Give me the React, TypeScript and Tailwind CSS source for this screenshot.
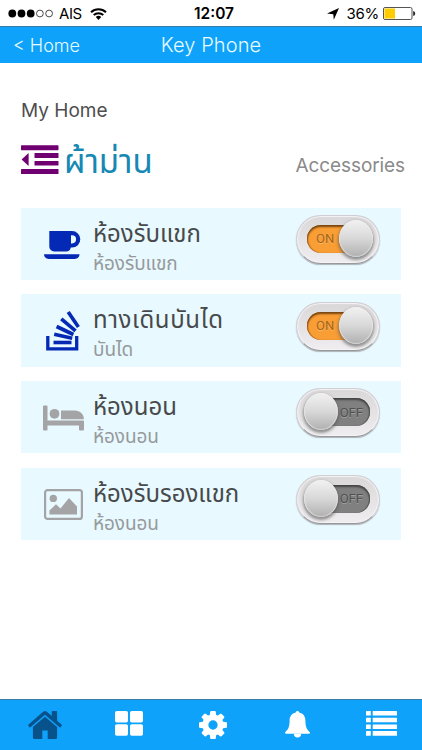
import type { ReactNode } from 'react'
import { clsx } from 'clsx'

type Room = {
  id: number
  title: string
  subtitle: string
  on: boolean
  wide?: boolean
  icon: ReactNode
}

const ROOMS: Room[] = [
  { id: 1, title: 'ห้องรับแขก', subtitle: 'ห้องรับแขก', on: true, icon: <CoffeeIcon /> },
  { id: 2, title: 'ทางเดินบันได', subtitle: 'บันได', on: true, wide: true, icon: <StairsIcon /> },
  { id: 3, title: 'ห้องนอน', subtitle: 'ห้องนอน', on: false, icon: <BedIcon /> },
  { id: 4, title: 'ห้องรับรองแขก', subtitle: 'ห้องนอน', on: false, icon: <PictureIcon /> },
]

function CoffeeIcon() {
  return (
    <svg viewBox="0 0 37 28" className="w-[37px] h-7 ml-px" fill="#0429b4">
      <path d="M5.300 0H28a8.300 8.300 0 0 1 0 16.600h-1.200A4.800 4.800 0 0 1 22 20.500H10a4.800 4.800 0 0 1-4.700-4.700zM27 4.200v8.200h1a4.100 4.100 0 0 0 0-8.200z" fillRule="evenodd" />
      <path d="M0 23.200h35.500c0 2.600-2.200 4.700-4.800 4.700H4.800C2.200 27.900 0 25.800 0 23.200z" />
    </svg>
  )
}

function StairsIcon() {
  return (
    <svg viewBox="0 0 34 40" className="w-[34px] h-10 ml-[3px] -mt-px" fill="none" stroke="#0429b4">
      <path d="M1.800 25v12.800h28.900V25" strokeWidth="3.300" />
      <g strokeWidth="3.600">
        <path d="M7.500 31.500h18" />
        <path d="M8.200 23.200l18 4" />
        <path d="M10.600 15.500l16.800 8" />
        <path d="M15.300 7.900l14.200 12" />
        <path d="M22.200 1.100l10.200 15" />
      </g>
    </svg>
  )
}

function BedIcon() {
  return (
    <svg viewBox="0 0 41 26" className="w-[41px] h-[26px]" fill="#a4a4a6">
      <path d="M0 1.500Q0 .5 1 .5h2.500q1 0 1 1v14H40q1 0 1 1v8q0 1-1 1h-3q-1 0-1-1v-4H4.500v4q0 1-1 1H1q-1 0-1-1z" />
      <circle cx="11.500" cy="8.800" r="4.900" />
      <path d="M18 5.500h14c5 0 8.900 3.800 8.900 8.800H18z" />
    </svg>
  )
}

function PictureIcon() {
  return (
    <svg viewBox="0 0 39 31" className="w-[39px] h-[31px] ml-px -mt-[2px]" fill="#a4a4a6">
      <rect x="1.100" y="1.100" width="36.800" height="28.800" rx="2.500" fill="none" stroke="#a4a4a6" strokeWidth="2.200" />
      <circle cx="9.300" cy="9.400" r="3.700" />
      <path d="M5.400 25.600v-4l6.600-6.400 4.500 4.300L25 9l8 8.500v8.100z" />
    </svg>
  )
}

function OutdentIcon() {
  return (
    <svg viewBox="0 0 38 30" className="w-[38px] h-[30px]" fill="#700072">
      <rect x="0" y="0.300" width="37.500" height="4.900" rx=".6" />
      <rect x="13.500" y="8" width="24" height="5" rx=".6" />
      <rect x="13.500" y="16" width="24" height="4.600" rx=".6" />
      <rect x="0" y="24" width="37.500" height="5" rx=".6" />
      <path d="M.6 14.400L7.600 8v13z" />
    </svg>
  )
}

function StatusBar() {
  return (
    <div className="h-[26px] shrink-0 grid grid-cols-[1fr_auto_1fr] items-center pl-2 pr-[6px] text-black text-[15px] leading-[26px]">
      <div className="flex items-center">
        <svg viewBox="0 0 46 9" className="w-[46px] h-[9px]" fill="#000">
          <circle cx="4.300" cy="4.500" r="3.900" />
          <circle cx="13.500" cy="4.500" r="3.900" />
          <circle cx="22.700" cy="4.500" r="3.900" />
          <circle cx="31.900" cy="4.500" r="3.400" fill="none" stroke="#333" strokeWidth=".9" />
          <circle cx="41.100" cy="4.500" r="3.400" fill="none" stroke="#333" strokeWidth=".9" />
        </svg>
        <span className="ml-[5px] w-6 tracking-[-0.4px]">AIS</span>
        <svg viewBox="0 0 17 12" className="ml-[7px] w-[17px] h-3" fill="none" stroke="#000" strokeWidth="2">
          <path d="M1 4.200a11 11 0 0 1 15 0" />
          <path d="M3.700 7.100a7 7 0 0 1 9.600 0" />
          <path d="M5.800 9.100a4 4 0 0 1 5.400 0L8.500 11.900z" fill="#000" stroke="none" />
        </svg>
      </div>
      <span className="font-semibold text-[15.500px] pt-px pl-[4px]">12:07</span>
      <div className="flex items-center justify-end">
        <svg viewBox="0 0 12 12" className="w-3 h-3 mr-2" fill="#000">
          <path d="M12 0L6.800 11.700 6.300 6.200 0 5.400z" />
        </svg>
        <span className="tracking-[-0.300px]">36%</span>
        <svg viewBox="0 0 33 13" className="w-[33px] h-[13px] ml-[4px]">
          <rect x=".5" y=".5" width="28.500" height="12" rx="1.500" fill="#fff" stroke="#555" />
          <rect x="1.500" y="1.500" width="10.500" height="10" fill="#fc0" />
          <path d="M30.200 4q2 .4 2 2.500t-2 2.500z" fill="#222" />
        </svg>
      </div>
    </div>
  )
}

function NavBar() {
  return (
    <div className="h-[37px] shrink-0 grid grid-cols-[1fr_auto_1fr] items-center bg-[#0fa2fa] border-t border-[#377ba6] px-[13px] text-[#e8fbff]">
      <span className="text-[18px] pt-px font-light">&lt; Home</span>
      <span className="text-[20px] font-light tracking-[0.1px]">Key Phone</span>
      <span />
    </div>
  )
}

function Toggle({ on }: { on: boolean }) {
  return (
    <div className="relative w-[84px] h-[49px] rounded-full border border-[#cfced2] border-b-[#98989c] bg-linear-to-b from-[#dad7d9] to-[#efedef] shadow-[0_1px_1px_#7778,inset_0_0_1px_1px_#f6f4f6]">
      <div
        className={clsx(
          "absolute top-[9px] left-[10px] w-[63px] h-[28px] rounded-full flex items-center text-[13px] font-['Roboto',sans-serif] [text-shadow:0_1px_0_#fff4]",
          on
            ? 'bg-[#f99d35] text-[#a4661c] pl-[9px] shadow-[inset_0_2px_2px_#754510,inset_1px_0_1px_#a8651d]'
            : 'bg-[#808080] text-[#505050] justify-end pr-[7px] shadow-[inset_0_2px_2px_#444,inset_-1px_0_1px_#555]'
        )}
      >
        {on ? 'ON' : 'OFF'}
      </div>
      <div
        className={clsx(
          'absolute top-[4px] w-[34px] h-[37px] rounded-[50%] bg-linear-to-b from-[#f2f2f2] via-[#d8d8d8] to-[#b0b0b0] shadow-[0_2px_3px_1px_#5559,inset_0_0_1px_1px_#eee8]',
          on ? 'left-[42px]' : 'left-[7px]'
        )}
      />
    </div>
  )
}

function RoomRow({ room }: { room: Room }) {
  return (
    <div className="h-[72.500px] flex items-start bg-[#e8f9ff] pl-[22px] pr-[21px]">
      <div className="w-[50px] h-[73px] flex items-center pt-[2px]">{room.icon}</div>
      <div className="flex-1 whitespace-nowrap">
        <div
          className={clsx(
            'mt-[10px] h-8 text-[24px] leading-8 text-[#47494b]',
            room.wide && 'tracking-[0.6px]'
          )}
        >
          {room.title}
        </div>
        <div className="mt-[2px] h-6 text-[19px] leading-6 tracking-[-0.1px] text-[#969a9c]">{room.subtitle}</div>
      </div>
      <div className="mt-[7.500px]">
        <Toggle on={room.on} />
      </div>
    </div>
  )
}

function TabBar() {
  return (
    <div className="h-[51px] shrink-0 bg-[#0fa2fa] border-t border-[#377ba6] grid grid-cols-5 justify-items-center items-start pt-[11px] pl-[3px] -mr-px">
      <svg viewBox="88 253 1616 1283" preserveAspectRatio="none" className="w-[34px] h-7" fill="#07528b">
        <path d="M1472 992v480q0 26-19 45t-45 19h-384v-384h-256v384h-384q-26 0-45-19t-19-45v-480q0-1 .5-3t.5-3l575-474 575 474q1 2 1 6zm223-69l-62 74q-8 9-21 11h-3q-13 0-21-7l-692-577-692 577q-12 8-24 7-13-2-21-11l-62-74q-8-10-7-23.500t11-21.500l719-599q32-26 76-26t76 26l244 204v-195q0-14 9-23t23-9h192q14 0 23 9t9 23v408l219 182q10 8 11 21.500t-7 23.500z" />
      </svg>
      <svg viewBox="0 0 28 25" className="w-7 h-[25px]" fill="#fff">
        <rect x="0" y="0" width="13" height="11.500" rx="1.800" />
        <rect x="15" y="0" width="13" height="11.500" rx="1.800" />
        <rect x="0" y="13.300" width="13" height="11.500" rx="1.800" />
        <rect x="15" y="13.300" width="13" height="11.500" rx="1.800" />
      </svg>
      <svg viewBox="128 128 1536 1536" className="w-7 h-7" fill="#fff">
        <path d="M1152 896q0-106-75-181t-181-75-181 75-75 181 75 181 181 75 181-75 75-181zm512-109v222q0 12-8 23t-20 13l-185 28q-19 54-39 91 35 50 107 138 10 12 10 25t-9 23q-27 37-99 108t-94 71q-12 0-26-9l-138-108q-44 23-91 38-16 136-29 186-7 28-36 28h-222q-14 0-24.500-8.500t-11.500-21.500l-28-184q-49-16-90-37l-141 107q-10 9-25 9-14 0-25-11-126-114-165-168-7-10-7-23 0-12 8-23 15-21 51-66.500t54-70.500q-27-50-41-99l-183-27q-13-2-21-12.500t-8-23.500v-222q0-12 8-23t19-13l186-28q14-46 39-92-40-57-107-138-10-12-10-24 0-10 9-23 26-36 98.500-107.500t94.500-71.500q13 0 26 10l138 107q44-23 91-38 16-136 29-186 7-28 36-28h222q14 0 24.500 8.500t11.500 21.500l28 184q49 16 90 37l142-107q9-9 24-9 13 0 25 10 129 119 165 170 7 8 7 22 0 12-8 23-15 21-51 66.500t-54 70.500q26 50 41 98l183 28q13 2 21 12.500t8 23.500z" />
      </svg>
      <svg viewBox="0 0 25 27" className="w-[25px] h-[27px]" fill="#fff">
        <path d="M12.500 0c1 0 1.700.7 1.700 1.600 4 .8 6.200 4 6.200 8 0 6.400 1.600 9.400 4.600 11.800 0 1-.8 1.300-1.700 1.300H1.700C.8 22.700 0 22.400 0 21.400c3-2.400 4.600-5.400 4.600-11.800 0-4 2.200-7.200 6.200-8C10.800.7 11.500 0 12.500 0z" />
        <path d="M8.900 22.700h7.200a3.600 3.800 0 0 1-7.200 0z" />
      </svg>
      <svg viewBox="0 0 31 25" className="w-[31px] h-[25px]" fill="#fff">
        {[0, 6.7, 13.4, 20.1].map((y) => (
          <g key={y}>
            <rect x="0" y={y} width="4.800" height="4.600" rx=".5" />
            <rect x="6.700" y={y} width="24.300" height="4.600" rx=".5" />
          </g>
        ))}
      </svg>
    </div>
  )
}

export default function App() {
  return (
    <div className="w-[422px] h-[750px] flex flex-col overflow-hidden bg-white font-['Inter','Noto_Sans_Thai','Noto_Sans',sans-serif]">
      <StatusBar />
      <NavBar />
      <main className="flex-1 min-h-0 px-[21px]">
        <h1 className="mt-[36px] h-6 text-[19px] leading-6 text-[#4e4e4e]">My Home</h1>
        <div className="mt-[19px] h-[42px] flex items-start justify-between -mr-[4px]">
          <div className="flex items-start text-[#1688b4]">
            <div className="mt-[3px]"><OutdentIcon /></div>
            <span className="ml-[5px] text-[33px] leading-[38px]">ผ้าม่าน</span>
          </div>
          <span className="mt-[12px] text-[19px] leading-6 tracking-[-0.1px] text-[#8a8a8a]">Accessories</span>
        </div>
        <div className="mt-[23.500px] flex flex-col gap-[14.200px]">
          {ROOMS.map((room) => (
            <RoomRow key={room.id} room={room} />
          ))}
        </div>
      </main>
      <TabBar />
    </div>
  )
}
